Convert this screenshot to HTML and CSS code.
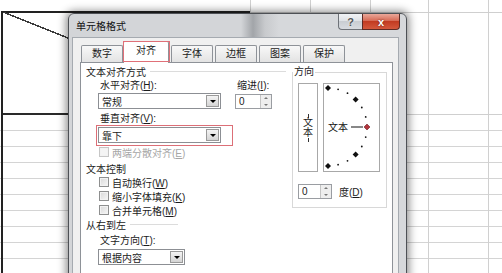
FILE: index.html
```html
<!DOCTYPE html>
<html>
<head>
  <meta charset="utf-8">
  <title>单元格格式</title>
  <link rel="stylesheet" href="styles.css">
</head>
<body>
  <div class="sheet">
    <div class="dialog">
      <div class="title-bar">
        <span class="title">单元格格式</span>
        <div class="caption-buttons">
          <span class="btn-help">?</span>
          <span class="btn-close">x</span>
        </div>
      </div>
      <div class="client">
        <div class="tabs">
          <div class="tab">数字</div>
          <div class="tab active">对齐</div>
          <div class="tab">字体</div>
          <div class="tab">边框</div>
          <div class="tab">图案</div>
          <div class="tab">保护</div>
        </div>
        <div class="panel">
          <div class="left-col">
            <div class="heading heading-wide">文本对齐方式</div>
            <div class="align-row">
              <div class="align-main">
                <div class="label">水平对齐(<u>H</u>):</div>
                <div class="select"><span>常规</span><i class="drop"></i></div>
              </div>
              <div class="indent">
                <div class="label">缩进(<u>I</u>):</div>
                <div class="spin spin-indent"><span>0</span><i class="spin-btn"></i></div>
              </div>
            </div>
            <div class="label label-indent label-gap">垂直对齐(<u>V</u>):</div>
            <div class="select select-indent marked"><span>靠下</span><i class="drop"></i></div>
            <div class="check-row disabled row-gap"><i class="check"></i><span>两端分散对齐(<u>E</u>)</span></div>
            <div class="heading row-gap">文本控制</div>
            <div class="check-row"><i class="check"></i><span>自动换行(<u>W</u>)</span></div>
            <div class="check-row"><i class="check"></i><span>缩小字体填充(<u>K</u>)</span></div>
            <div class="check-row"><i class="check"></i><span>合并单元格(<u>M</u>)</span></div>
            <div class="heading heading-short">从右到左</div>
            <div class="label label-indent label-gap">文字方向(<u>T</u>):</div>
            <div class="select select-indent select-short"><span>根据内容</span><i class="drop"></i></div>
          </div>

          <fieldset class="orient">
            <legend>方向</legend>
            <div class="orient-boxes">
              <div class="vtext"><span>文</span><span>本</span></div>
              <div class="dial">
                <svg width="55" height="87" viewBox="0 0 55 87">
                  <g fill="#111">
                    <polygon points="4,1 7,4 4,7 1,4"/>
                    <polygon points="31.6,12.4 34.6,15.4 31.6,18.4 28.6,15.4"/>
                    <polygon points="31.6,67.6 34.6,70.6 31.6,73.6 28.6,70.6"/>
                    <polygon points="4,79 7,82 4,85 1,82"/>
                    <circle cx="14.1" cy="5.3" r="0.9"/>
                    <circle cx="23.5" cy="9.2" r="0.9"/>
                    <circle cx="37.8" cy="23.5" r="0.9"/>
                    <circle cx="41.7" cy="32.9" r="0.9"/>
                    <circle cx="41.7" cy="53.1" r="0.9"/>
                    <circle cx="37.8" cy="62.5" r="0.9"/>
                    <circle cx="23.5" cy="76.8" r="0.9"/>
                    <circle cx="14.1" cy="80.7" r="0.9"/>
                  </g>
                  <text x="4" y="47" font-size="10" fill="#111">文本</text>
                  <line x1="27" y1="43" x2="39" y2="43" stroke="#555" stroke-width="1.4"/>
                  <polygon points="43,40 46,43 43,46 40,43" fill="#b3343c" stroke="#6a2226" stroke-width="0.6"/>
                </svg>
              </div>
            </div>
            <div class="deg-row">
              <div class="spin spin-deg"><span>0</span><i class="spin-btn"></i></div>
              <span class="deg-label">度(<u>D</u>)</span>
            </div>
          </fieldset>
        </div>
      </div>
    </div>
  </div>
</body>
</html>
```

FILE: styles.css
```css
/* Excel 单元格格式 dialog over a worksheet */
body {
  margin: 0;
  overflow: hidden;
  font-family: "Liberation Sans", "Noto Sans CJK SC", sans-serif;
  font-size: 10px;
  color: #1b1b1b;
}

/* worksheet grid behind the dialog */
.sheet {
  position: relative;
  width: 502px;
  height: 273px;
  overflow: hidden;
  background:
    linear-gradient(to top right, transparent calc(50% - 0.7px), #3a3a3a calc(50% - 0.7px), #3a3a3a calc(50% + 0.7px), transparent calc(50% + 0.7px)) 3px 12px / 100px 40px no-repeat,
    linear-gradient(#222, #222) 2px 11px / 248px 2px no-repeat,
    linear-gradient(#222, #222) 1px 11px / 2px 262px no-repeat,
    linear-gradient(#2a2a2a, #2a2a2a) 2px 113px / 80px 2px no-repeat,
    linear-gradient(#cfcfcf, #cfcfcf) 250px 12px / 252px 1px no-repeat,
    linear-gradient(#cfcfcf, #cfcfcf) 300px 114px / 202px 1px no-repeat,
    linear-gradient(#d0d0d0, #d0d0d0) 250px 0 / 1px 100% no-repeat,
    linear-gradient(#d0d0d0, #d0d0d0) 310px 0 / 1px 100% no-repeat,
    linear-gradient(#d0d0d0, #d0d0d0) 370px 0 / 1px 100% no-repeat,
    linear-gradient(#d0d0d0, #d0d0d0) 428px 0 / 1px 100% no-repeat,
    linear-gradient(#d0d0d0, #d0d0d0) 488px 0 / 1px 100% no-repeat,
    repeating-linear-gradient(to bottom, transparent 0, transparent 15px, #d4d4d4 15px, #d4d4d4 16px) 0 115px / 100% 158px no-repeat,
    #fff;
}

.dialog {
  position: absolute;
  left: 68px;
  top: 13px;
  width: 339px;
  height: 268px;
  box-sizing: border-box;
  display: flex;
  flex-direction: column;
  padding: 0 7px 0 3px;
  border: 1px solid #4d5055;
  border-radius: 6px 6px 0 0;
  background: linear-gradient(to right, #d3d5d8 0, #d3d5d8 172px, #a2a5a9 184px, #c8cacd 196px, #d6d8db 210px, #d6d8db 100%);
  box-shadow: 0 0 9px 2px rgba(0, 0, 0, 0.45);
}

.title-bar {
  display: flex;
  align-items: center;
  height: 23px;
}

.title {
  padding-left: 4px;
  color: #111;
}

.caption-buttons {
  display: flex;
  align-self: flex-start;
  margin-left: auto;
  margin-right: -1px;
}

.btn-help,
.btn-close {
  display: flex;
  align-items: center;
  justify-content: center;
  height: 16px;
  box-sizing: border-box;
  font-size: 11px;
  font-weight: bold;
}

.btn-help {
  width: 24px;
  border: 1px solid #6e7278;
  border-top: none;
  border-right: none;
  border-radius: 0 0 0 4px;
  background: linear-gradient(#f1f3f5, #dfe2e6 45%, #c9cdd2 50%, #d8dbe0);
  color: #555;
  text-shadow: 0 0 2px #fff;
}

.btn-close {
  width: 38px;
  border: 1px solid #5d2b25;
  border-top: none;
  border-radius: 0 0 4px 0;
  background: linear-gradient(#eaa89a, #d66a55 45%, #c23b22 50%, #d4583c);
  color: #fff;
  text-shadow: 0 0 2px #5a1a10;
}

.client {
  flex: 1;
  display: flex;
  flex-direction: column;
  background: #f0f0f0;
  border: 1px solid #a5aab0;
  border-bottom: none;
  padding: 3px 5px 0 7px;
}

.tabs {
  display: flex;
  align-items: flex-end;
  gap: 2px;
  height: 21px;
  padding-left: 1px;
}

.tab {
  width: 42px;
  height: 17px;
  box-sizing: border-box;
  border: 1px solid #8e9298;
  border-bottom: none;
  border-radius: 2px 2px 0 0;
  background: linear-gradient(#f8f8f8, #e3e3e3);
  text-align: center;
  line-height: 16px;
}

.tab.active {
  position: relative;
  z-index: 1;
  width: 46px;
  height: 22px;
  margin: 0 0 -1px -2px;
  background: #fff;
  line-height: 18px;
}

/* red annotation box */
.tab.active::after {
  content: "";
  position: absolute;
  inset: -1px -2px 1px -1px;
  border: 1px solid #e07078;
}

.panel {
  flex: 1;
  display: flex;
  background: #fff;
  border: 1px solid #8e9298;
  border-bottom: none;
}

.left-col {
  width: 206px;
  padding-left: 5px;
}

.heading {
  display: flex;
  align-items: center;
  height: 14px;
}

.heading-wide {
  margin-top: 1px;
}

.heading-wide::after,
.heading-short::after {
  content: "";
  height: 1px;
  margin-left: 4px;
  background: #dcdcdc;
}

.heading-wide::after {
  flex: 1;
  margin-right: 6px;
}

.heading-short::after {
  width: 48px;
}

.label {
  height: 15px;
  line-height: 15px;
  padding-left: 2px;
  white-space: nowrap;
}

.label-indent {
  margin-left: 12px;
}

.label-gap {
  margin-top: 2px;
}

.row-gap {
  margin-top: 2px;
}

.align-row {
  display: flex;
  margin-left: 12px;
}

.align-main {
  width: 123px;
}

.indent {
  margin-left: 14px;
}

.select {
  display: flex;
  align-items: center;
  width: 123px;
  height: 16px;
  box-sizing: border-box;
  padding-left: 3px;
  border: 1px solid #8c8f94;
  background: #fff;
}

.select span {
  flex: 1;
}

.select-indent {
  margin-left: 12px;
  margin-top: 1px;
}

.select-short {
  width: 87px;
  margin-top: 1px;
}

.select.marked {
  position: relative;
}

.select.marked::after {
  content: "";
  position: absolute;
  inset: -3px -13px -4px -3px;
  border: 1px solid #dc6f77;
}

.drop {
  display: flex;
  align-items: center;
  justify-content: center;
  width: 13px;
  height: 12px;
  margin-right: 1px;
  box-sizing: border-box;
  border: 1px solid #9a9a9a;
  background: linear-gradient(#f4f4f4, #d4d4d4);
}

.drop::before {
  content: "";
  border-top: 3px solid #000;
  border-left: 3px solid transparent;
  border-right: 3px solid transparent;
}

.spin {
  display: flex;
  align-items: center;
  height: 15px;
  box-sizing: border-box;
  padding-left: 3px;
  border: 1px solid #9a9da2;
  background: #fff;
}

.spin span {
  flex: 1;
}

.spin-indent {
  width: 37px;
  margin-top: 1px;
}

.spin-deg {
  width: 34px;
}

.spin-btn {
  display: flex;
  flex-direction: column;
  align-items: center;
  justify-content: space-around;
  width: 11px;
  height: 13px;
  box-sizing: border-box;
  border-left: 1px solid #c4c4c4;
  background: #eee;
}

.spin-btn::before {
  content: "";
  border-bottom: 2px solid #777;
  border-left: 2px solid transparent;
  border-right: 2px solid transparent;
}

.spin-btn::after {
  content: "";
  border-top: 2px solid #777;
  border-left: 2px solid transparent;
  border-right: 2px solid transparent;
}

.check-row {
  display: flex;
  align-items: center;
  gap: 3px;
  height: 14px;
  margin-left: 13px;
}

.check {
  width: 10px;
  height: 10px;
  box-sizing: border-box;
  border: 1px solid #8e8f8f;
  background: linear-gradient(135deg, #d8d8d8, #f7f7f7);
  box-shadow: inset 0 0 0 1px #f2f2f2;
}

.check-row.disabled {
  color: #a6a6a6;
}

.check-row.disabled .check {
  border-color: #c6c6c6;
  background: #f4f4f4;
}

.orient {
  width: 95px;
  height: 143px;
  box-sizing: border-box;
  margin: 2px 0 0;
  padding: 4px 5px 0 5px;
  border: 1px solid #d8d8d8;
}

.orient legend {
  margin-left: -5px;
  padding: 0 1px;
  line-height: 14px;
}

.orient-boxes {
  display: flex;
  gap: 5px;
}

.vtext {
  display: flex;
  flex-direction: column;
  align-items: center;
  justify-content: center;
  width: 20px;
  height: 89px;
  box-sizing: border-box;
  border: 1px solid #a8a8a8;
  background: #fff;
  line-height: 10px;
}

.vtext::before,
.vtext::after {
  content: "";
  width: 1px;
  height: 4px;
  background: #333;
}

.dial {
  width: 57px;
  height: 89px;
  box-sizing: border-box;
  border: 1px solid #a8a8a8;
  background: #fff;
}

.dial svg {
  display: block;
  font-family: "Noto Sans CJK SC", sans-serif;
}

.deg-row {
  display: flex;
  align-items: center;
  gap: 7px;
  margin-top: 12px;
}
```
